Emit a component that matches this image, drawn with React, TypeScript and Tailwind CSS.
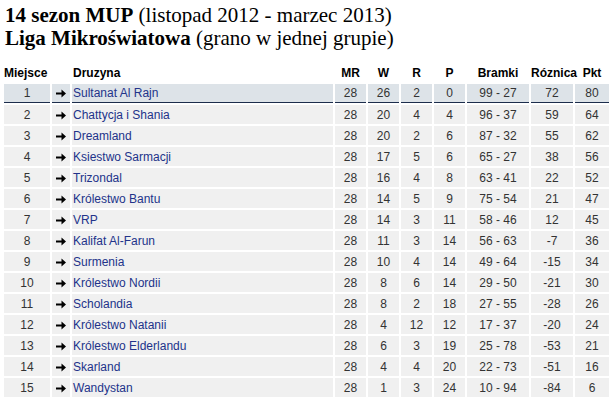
const rows: [number, string, number, number, number, number, string, number, number][] = [
  [1, 'Sultanat Al Rajn', 28, 26, 2, 0, '99 - 27', 72, 80],
  [2, 'Chattycja i Shania', 28, 20, 4, 4, '96 - 37', 59, 64],
  [3, 'Dreamland', 28, 20, 2, 6, '87 - 32', 55, 62],
  [4, 'Ksiestwo Sarmacji', 28, 17, 5, 6, '65 - 27', 38, 56],
  [5, 'Trizondal', 28, 16, 4, 8, '63 - 41', 22, 52],
  [6, 'Królestwo Bantu', 28, 14, 5, 9, '75 - 54', 21, 47],
  [7, 'VRP', 28, 14, 3, 11, '58 - 46', 12, 45],
  [8, 'Kalifat Al-Farun', 28, 11, 3, 14, '56 - 63', -7, 36],
  [9, 'Surmenia', 28, 10, 4, 14, '49 - 64', -15, 34],
  [10, 'Królestwo Nordii', 28, 8, 6, 14, '29 - 50', -21, 30],
  [11, 'Scholandia', 28, 8, 2, 18, '27 - 55', -28, 26],
  [12, 'Królestwo Natanii', 28, 4, 12, 12, '17 - 37', -20, 24],
  [13, 'Królestwo Elderlandu', 28, 6, 3, 19, '25 - 78', -53, 21],
  [14, 'Skarland', 28, 4, 4, 20, '22 - 73', -51, 16],
  [15, 'Wandystan', 28, 1, 3, 24, '10 - 94', -84, 6],
];

function Arrow() {
  return (
    <svg width="10" height="9" viewBox="0 0 10 9" className="inline-block align-middle">
      <path d="M0 3.5h5.5V0.5L10 4.5 5.5 8.5V5.5H0z" fill="#000" />
    </svg>
  );
}

export default function App() {
  return (
    <div className="bg-white w-[611px] h-[402px] overflow-hidden font-['Liberation_Sans',Arial,sans-serif]">
      <div className="pl-[5px] pt-[4px] font-['Liberation_Serif','Times_New_Roman',serif] text-[21px] leading-[23px] text-black">
        <div>
          <b>14 sezon MUP</b> (listopad 2012 - marzec 2013)
        </div>
        <div>
          <b>Liga Mikroświatowa</b> (grano w jednej grupie)
        </div>
      </div>
      <table className="mt-[11px] ml-[2px] w-[609px] table-fixed border-separate border-spacing-[2px] text-[12px]">
        <thead>
          <tr className="h-[19px] text-black font-bold">
            <th className="w-[46px] p-0 text-left">Miejsce</th>
            <th className="w-[18px] p-0"></th>
            <th className="w-[261px] p-0 pl-[1px] text-left">Druzyna</th>
            <th className="w-[31px] p-0 text-center">MR</th>
            <th className="w-[31px] p-0 text-center">W</th>
            <th className="w-[31px] p-0 text-center">R</th>
            <th className="w-[31px] p-0 text-center">P</th>
            <th className="w-[62px] p-0 text-center">Bramki</th>
            <th className="w-[42px] p-0 text-center">Róznica</th>
            <th className="p-0 text-center">Pkt</th>
          </tr>
        </thead>
        <tbody className="text-[#333]">
          {rows.map((r) => {
            const first = r[0] === 1;
            const cell = first
              ? 'h-[19px] p-0 bg-[#dde3e8] border-b border-[#1c2d4c]'
              : 'h-[19px] p-0 bg-[#f0f0f0]';
            return (
              <tr key={r[0]}>
                <td className={`${cell} text-center`}>{r[0]}</td>
                <td className={`${cell} text-center`}>
                  <Arrow />
                </td>
                <td className={`${cell} pl-[1px] text-[#22338a] whitespace-nowrap`}>{r[1]}</td>
                <td className={`${cell} text-center`}>{r[2]}</td>
                <td className={`${cell} text-center`}>{r[3]}</td>
                <td className={`${cell} text-center`}>{r[4]}</td>
                <td className={`${cell} text-center`}>{r[5]}</td>
                <td className={`${cell} text-center`}>{r[6]}</td>
                <td className={`${cell} text-center`}>{r[7]}</td>
                <td className={`${cell} text-center`}>{r[8]}</td>
              </tr>
            );
          })}
        </tbody>
      </table>
    </div>
  );
}
